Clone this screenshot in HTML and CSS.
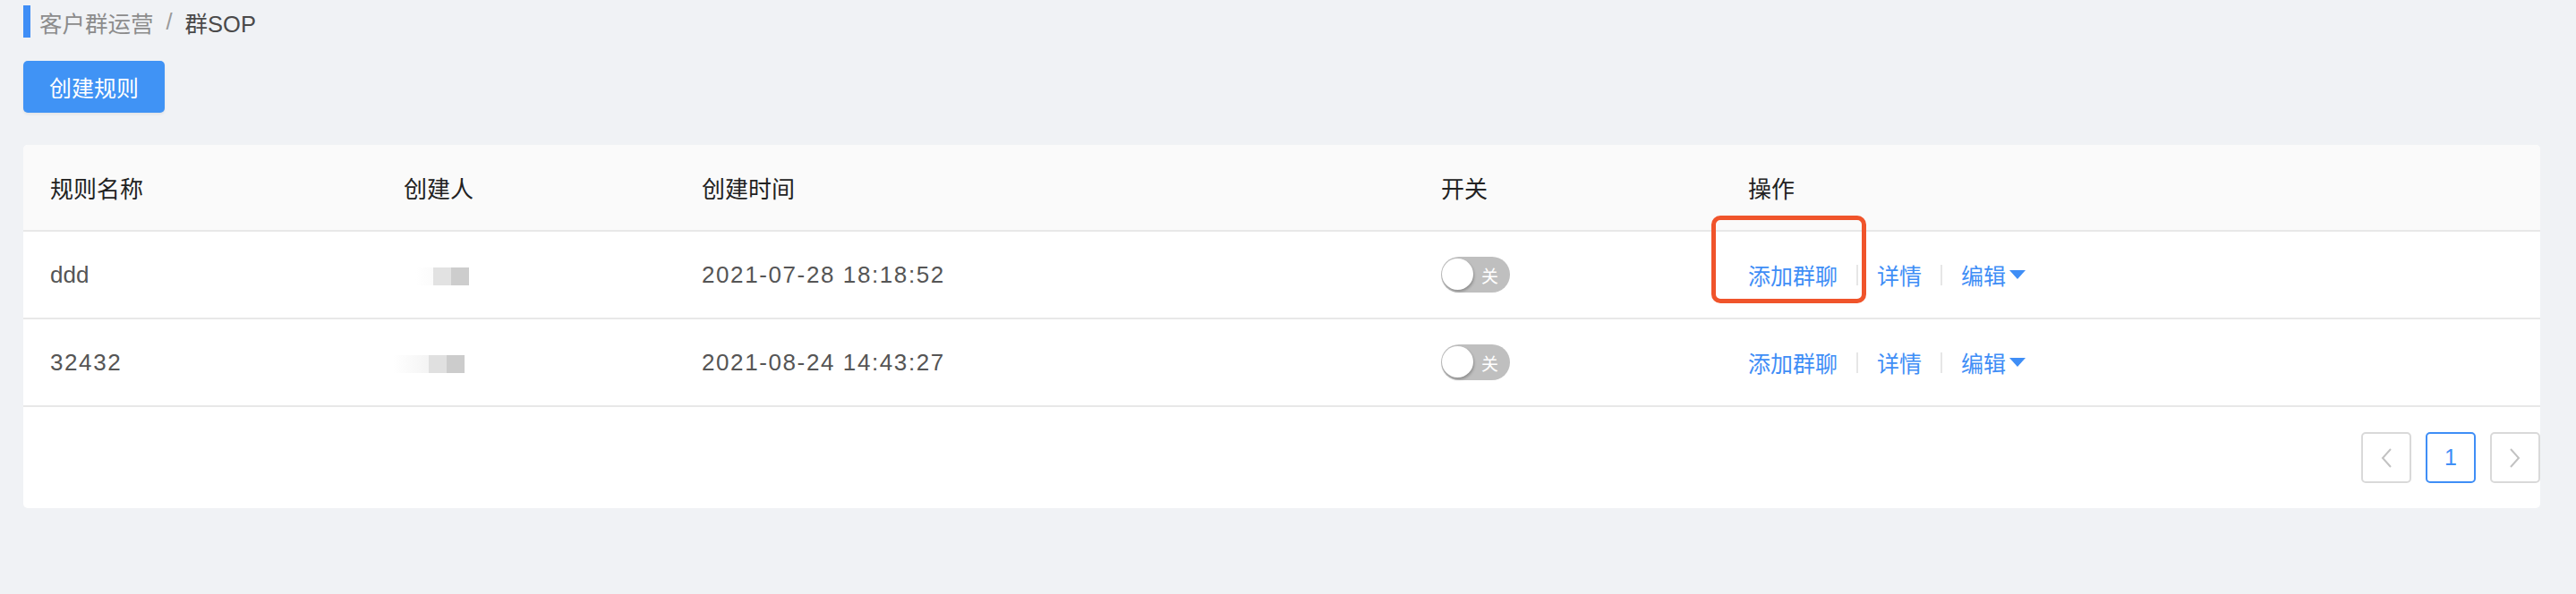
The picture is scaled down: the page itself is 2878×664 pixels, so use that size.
FILE: index.html
```html
<!DOCTYPE html>
<html lang="zh-CN">
<head>
<meta charset="utf-8">
<title>群SOP</title>
<link rel="stylesheet" href="styles.css">
</head>
<body>
<div class="page">
  <div class="breadcrumb">
    <span class="crumb-bar"></span>
    <span class="crumb">客户群运营</span>
    <span class="crumb-sep">/</span>
    <span class="crumb crumb-current">群SOP</span>
  </div>

  <button class="btn-primary">创建规则</button>

  <div class="card">
    <table class="table">
      <colgroup>
        <col class="c1"><col class="c2"><col class="c3"><col class="c4"><col class="c5">
      </colgroup>
      <thead>
        <tr>
          <th>规则名称</th>
          <th>创建人</th>
          <th>创建时间</th>
          <th>开关</th>
          <th>操作</th>
        </tr>
      </thead>
      <tbody>
        <tr>
          <td>ddd</td>
          <td><span class="blur blur-a"><i class="b0"></i><i class="b1"></i><i class="b2"></i></span></td>
          <td class="num">2021-07-28 18:18:52</td>
          <td><span class="switch"><span class="knob"></span><span class="switch-text">关</span></span></td>
          <td class="ops-cell">
            <span class="annot"></span>
            <span class="ops">
              <a class="op">添加群聊</a><span class="op-sep"></span><a class="op">详情</a><span class="op-sep"></span><a class="op">编辑<span class="caret"></span></a>
            </span>
          </td>
        </tr>
        <tr>
          <td class="num">32432</td>
          <td><span class="blur blur-b"><i class="b0"></i><i class="b1"></i><i class="b2"></i></span></td>
          <td class="num">2021-08-24 14:43:27</td>
          <td><span class="switch"><span class="knob"></span><span class="switch-text">关</span></span></td>
          <td class="ops-cell">
            <span class="ops">
              <a class="op">添加群聊</a><span class="op-sep"></span><a class="op">详情</a><span class="op-sep"></span><a class="op">编辑<span class="caret"></span></a>
            </span>
          </td>
        </tr>
      </tbody>
    </table>
    <div class="pager">
      <span class="pg pg-nav"><svg width="12" height="22" viewBox="0 0 12 22"><path d="M11 1 L2 11 L11 21" fill="none" stroke="#c2c2c2" stroke-width="2"/></svg></span>
      <span class="pg pg-active">1</span>
      <span class="pg pg-nav"><svg width="12" height="22" viewBox="0 0 12 22"><path d="M1 1 L10 11 L1 21" fill="none" stroke="#c2c2c2" stroke-width="2"/></svg></span>
    </div>
  </div>
</div>
</body>
</html>
```

FILE: styles.css
```css
* { box-sizing: border-box; }
html, body { margin: 0; padding: 0; }
body {
  background: #f0f2f5;
  font-family: "Liberation Sans", "Noto Sans CJK SC", sans-serif;
  font-size: 26px;
  color: #555;
  width: 2878px;
  height: 664px;
  overflow: hidden;
}
.page {
  padding: 6px 40px 0 26px;
}
.breadcrumb {
  display: flex;
  align-items: center;
  height: 36px;
  font-size: 25.5px;
}
.crumb-bar {
  width: 8px;
  height: 36px;
  background: #3f8ef6;
  margin-right: 10px;
}
.crumb { color: #8c8c8c; }
.crumb-current { color: #4a4a4a; }
.crumb-sep { color: #9a9a9a; margin: 0 14px 0 14px; }

.btn-primary {
  display: block;
  margin-top: 26px;
  width: 158px;
  height: 58px;
  border: none;
  border-radius: 5px;
  background: #4093f5;
  color: #fff;
  font-family: "Noto Sans CJK SC", sans-serif;
  font-size: 25px;
  padding: 0;
  box-shadow: 0 2px 3px rgba(0,0,0,0.06);
}

.card {
  margin-top: 36px;
  background: #fff;
  border-radius: 5px;
  overflow: hidden;
}
.table {
  width: 100%;
  border-collapse: collapse;
  table-layout: fixed;
}
col.c1 { width: 395px; }
col.c2 { width: 333px; }
col.c3 { width: 826px; }
col.c4 { width: 343px; }
col.c5 { width: auto; }
.table th {
  background: #fafafa;
  height: 96px;
  text-align: left;
  font-weight: 400;
  color: #222;
  padding: 0 30px;
  border-bottom: 2px solid #e8e8e8;
  font-family: "Noto Sans CJK SC", sans-serif;
}
.table td {
  height: 98px;
  padding: 0 30px;
  border-bottom: 2px solid #e8e8e8;
  color: #555;
  white-space: nowrap;
}
.num { letter-spacing: 1.6px; }

.blur { display: inline-flex; vertical-align: middle; height: 20px; margin-left: 13px; }
.blur i { display: block; width: 20px; height: 20px; }
.blur-a .b0 { background: linear-gradient(90deg, #fff, #fbfbfb); }
.blur-a .b1 { background: #e2e2e2; }
.blur-a .b2 { background: #cdcdcd; }
.blur-b { margin-left: -12px; }
.blur-b .b0 { width: 40px; background: linear-gradient(90deg, #fff, #f4f4f4); }
.blur-b .b1 { background: #e0e0e0; }
.blur-b .b2 { background: #cccccc; }

.switch {
  position: relative;
  display: inline-flex;
  align-items: center;
  justify-content: flex-end;
  width: 77px;
  height: 40px;
  border-radius: 20px;
  background: #bfbfbf;
  padding-right: 13px;
  vertical-align: middle;
}
.knob {
  position: absolute;
  left: 1px;
  top: 2px;
  width: 35px;
  height: 35px;
  border-radius: 50%;
  background: #fff;
  box-shadow: 1px 2px 3px rgba(0,0,0,0.25);
}
.switch-text {
  color: #fff;
  font-size: 19px;
  font-family: "Noto Sans CJK SC", sans-serif;
}

.ops-cell { position: relative; }
.ops {
  display: inline-flex;
  align-items: center;
  font-family: "Noto Sans CJK SC", sans-serif;
  font-size: 25px;
}
.op {
  color: #3f8ef6;
  display: inline-flex;
  align-items: center;
}
.op-sep {
  display: inline-block;
  width: 2px;
  height: 23px;
  background: #e6e6e6;
  margin: 0 21px;
}
.caret {
  display: inline-block;
  width: 0;
  height: 0;
  margin-left: 4px;
  border-left: 9px solid transparent;
  border-right: 9px solid transparent;
  border-top: 10px solid #3f8ef6;
}
.annot {
  position: absolute;
  left: -11px;
  top: -18px;
  width: 173px;
  height: 98px;
  border: 5px solid #f0542b;
  border-radius: 10px;
}

.pager {
  display: flex;
  justify-content: flex-end;
  gap: 16px;
  padding: 28px 0;
}
.pg {
  width: 56px;
  height: 57px;
  border: 2px solid #d9d9d9;
  border-radius: 5px;
  display: flex;
  align-items: center;
  justify-content: center;
  background: #fff;
}
.pg-active {
  border-color: #3f8ef6;
  color: #3f8ef6;
  font-size: 25px;
}
```
